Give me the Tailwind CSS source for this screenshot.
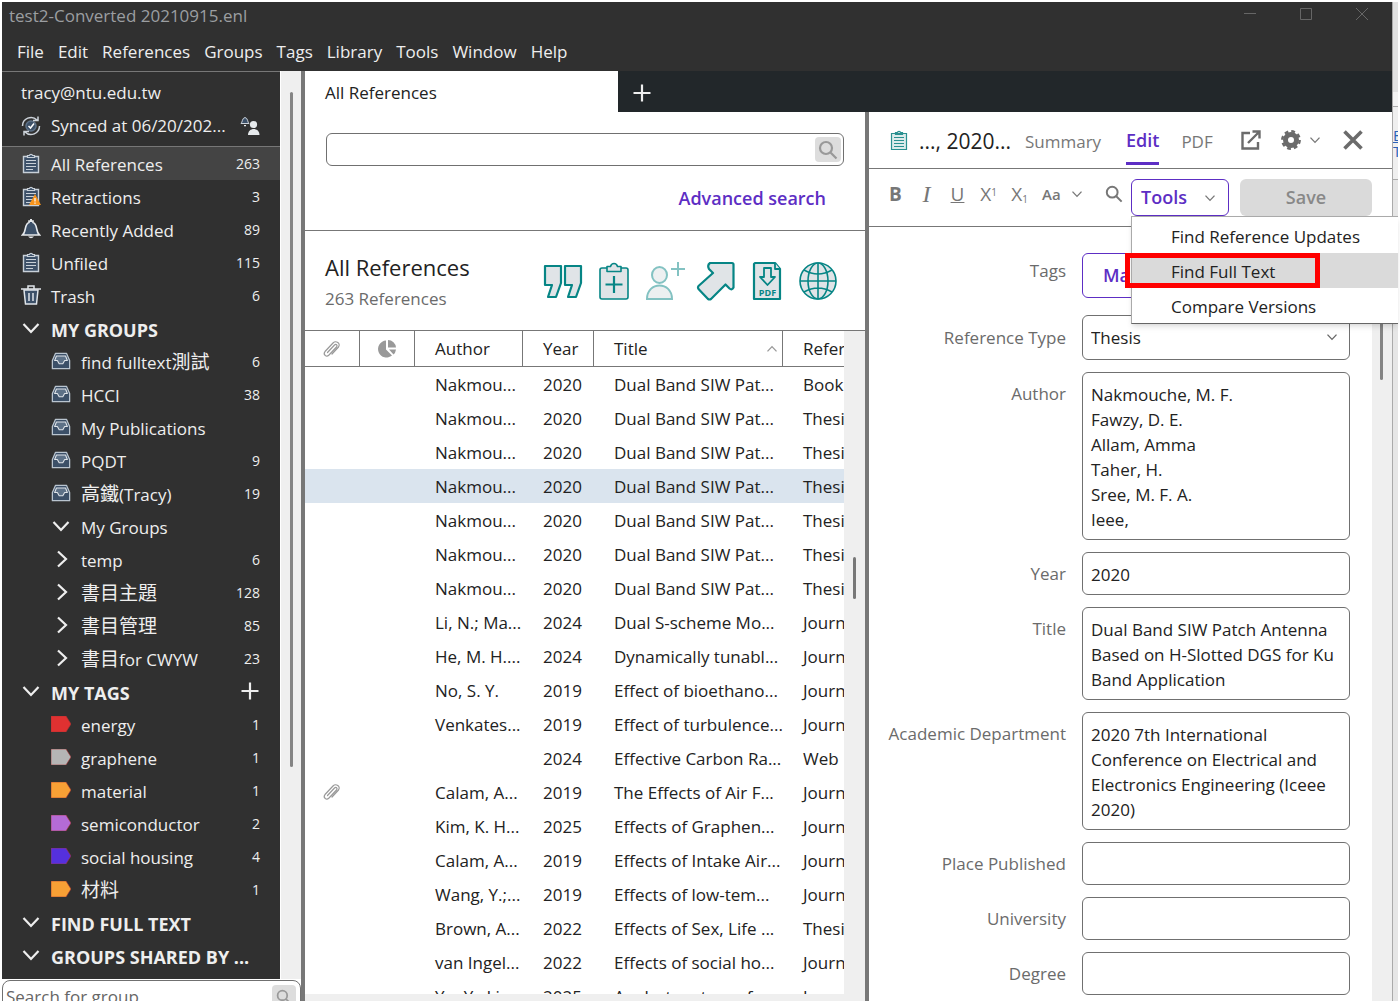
<!DOCTYPE html>
<html lang="en">
<head>
  <meta charset="UTF-8" />
  <meta name="viewport" content="width=device-width, initial-scale=1.0" />
  <script src="https://cdn.jsdelivr.net/npm/@tailwindcss/browser@4"></script>
  <title>test2-Converted 20210915.enl</title>
</head>
<body class="bg-white font-['Open_Sans','Noto_Sans_CJK_TC',sans-serif] text-[17px] text-[#222]">
  <!-- shared icons -->
  <svg class="hidden">
    <symbol id="i-clip" viewBox="0 0 20 22">
      <path d="M2.500 4.500h15v16h-15z" fill="#3c5068" stroke="#c8d0d8" stroke-width="1.400" />
      <path d="M6.500 5.500v-2h1.800a1.800 1.800 0 0 1 3.400 0h1.800v2z" fill="#3c5068" stroke="#c8d0d8" stroke-width="1.200" />
      <path d="M5 8.500h10M5 11.500h10M5 14.500h10M5 17.500h7" stroke="#c8d0d8" stroke-width="1.100" />
    </symbol>
    <symbol id="i-tray" viewBox="0 0 22 20">
      <path d="M5 1.500h12l3.500 8v9h-19v-9z" fill="#3c5068" stroke="#b9c4cf" stroke-width="1.400" stroke-linejoin="round" />
      <path d="M6 4.500h10l2 5h-3l-2 3.500H9L7 9.500H4z" fill="#5d7187" stroke="#dfe4e9" stroke-width="1.200" stroke-linejoin="round" />
    </symbol>
    <symbol id="i-down" viewBox="0 0 20 20"><path d="M2.500 6l7.500 8 7.500-8" fill="none" stroke="currentColor" stroke-width="2.200" /></symbol>
    <symbol id="i-right" viewBox="0 0 20 20"><path d="M7 2.500l8 7.500-8 7.500" fill="none" stroke="currentColor" stroke-width="2.200" /></symbol>
    <symbol id="i-plus" viewBox="0 0 20 20"><path d="M10 1.500v17M1.500 10h17" fill="none" stroke="currentColor" stroke-width="2.200" /></symbol>
    <symbol id="i-tag" viewBox="0 0 20 16"><path d="M0 0h15l5 8-5 8H0z" fill="currentColor" stroke="#a33" stroke-width=".6" /></symbol>
    <symbol id="i-search" viewBox="0 0 20 20"><path d="M12.500 12.500l6 6M14 8A6 6 0 1 1 2 8a6 6 0 0 1 12 0z" fill="none" stroke="currentColor" stroke-width="2.200" /></symbol>
    <symbol id="i-paper" viewBox="0 0 20 20"><path d="M5.500 13.500l7-7.500c1.500-1.500 3.500.3 2 2l-7.500 8c-2.800 2.600-6.200-.5-4-3.500l8-8.500c3-3 8 .5 5.500 4l-6.500 7" fill="none" stroke="#999" stroke-width="1.200" stroke-linecap="round" /></symbol>
  </svg>

  <div class="flex h-screen overflow-hidden p-[2px]">
    <div class="flex min-w-0 flex-1 flex-col">
      <!-- title bar and menu -->
      <header class="h-[69px] shrink-0 bg-[#303030]">
        <div class="flex h-7 items-center justify-between pr-6 pl-[7px]">
          <h1 class="text-[#9b9ea1]">test2-Converted 20210915.enl</h1>
          <div class="flex items-center gap-11 pb-1 text-[#666]">
            <button aria-label="Minimize"><svg class="size-3" viewBox="0 0 12 12"><path d="M0 5.500h12" stroke="currentColor" /></svg></button>
            <button aria-label="Maximize"><svg class="size-3" viewBox="0 0 12 12"><path d="M.5.500h11v11H.5z" fill="none" stroke="currentColor" /></svg></button>
            <button aria-label="Close"><svg class="size-3" viewBox="0 0 12 12"><path d="M0 0l12 12M12 0L0 12" stroke="currentColor" /></svg></button>
          </div>
        </div>
        <nav class="flex h-11 items-center gap-[14px] pl-[15px] text-[#eee]">
          <button>File</button>
          <button>Edit</button>
          <button>References</button>
          <button>Groups</button>
          <button>Tags</button>
          <button>Library</button>
          <button>Tools</button>
          <button>Window</button>
          <button>Help</button>
        </nav>
      </header>

      <div class="flex min-h-0 flex-1">
        <!-- sidebar -->
        <div class="flex w-[299px] shrink-0 flex-col overflow-hidden">
          <div class="flex h-[908px] shrink-0">
            <aside class="w-[278px] bg-[#303030] text-[#eee]">
              <div class="h-[76px] border-y border-[#777] pt-1 pr-5 pl-[19px]">
                <p class="h-[33px] leading-[33px]">tracy@ntu.edu.tw</p>
                <div class="flex h-[33px] items-center">
                  <svg class="mr-[10px] size-5" viewBox="0 0 20 20" fill="none" stroke="#cdd3da" stroke-width="1.500">
                    <circle cx="10" cy="10" r="5" fill="#3c5068" stroke="#5d7187" />
                    <path d="M7.500 10l2 2 3.500-4.500" stroke="#fff" />
                    <path d="M1.500 10A8.500 8.500 0 0 1 16 4M12 4.500h5V.5M18.500 10A8.500 8.500 0 0 1 4 16M8 15.500H3v4" />
                  </svg>
                  <span class="flex-1">Synced at 06/20/202...</span>
                  <svg class="size-5" viewBox="0 0 20 20" fill="#e6e9ec">
                    <path d="M1 7.500c1.500-1 1-5.500 4-6 3 .5 2.500 5 4 6z" fill="#3c5068" stroke="#cdd3da" />
                    <path d="M4 9h2v1.200H4z" />
                    <circle cx="13.500" cy="8.500" r="3.600" /><path d="M8 19c0-8 11.500-8 11.500 0z" />
                  </svg>
                </div>
              </div>
              <ul id="side-list"></ul>
            </aside>
            <div class="flex w-[21px] justify-center border-l border-white bg-[#efefef]">
              <div class="mt-[21px] h-[675px] w-[3px] rounded bg-[#848484]"></div>
            </div>
          </div>
          <div class="mt-px flex h-[34px] shrink-0 items-center rounded-lg border border-[#707070] pr-1 pl-[3px]">
            <input type="text" aria-label="Search for group" placeholder="Search for group" class="min-w-0 flex-1 placeholder:text-[#666] outline-none" />
            <button aria-label="Search groups" class="flex size-6 items-center justify-center rounded bg-[#ddd] text-[#999]"><svg class="size-4"><use href="#i-search" /></svg></button>
          </div>
        </div>
        <div class="w-1 shrink-0 bg-[#777]"></div>

        <div class="flex min-w-0 flex-1 flex-col">
          <!-- tab strip -->
          <div class="flex h-[41px] shrink-0 bg-[#22272a]">
            <button class="w-[313px] bg-white pt-[2px] pl-5 text-left">All References</button>
            <button aria-label="New tab" class="px-[14px] pt-[2px] text-[#eee]"><svg class="size-5"><use href="#i-plus" /></svg></button>
          </div>

          <div class="grid min-h-0 flex-1 grid-cols-[minmax(0,560fr)_4px_minmax(0,523fr)] grid-rows-[minmax(0,1fr)]">
            <!-- reference list -->
            <main class="flex min-h-0 flex-col">
              <div class="h-[119px] shrink-0 border-b border-[#777] px-[21px] pt-[21px]">
                <div class="flex h-[33px] items-center rounded-md border border-[#707070] pr-[2px]">
                  <input type="text" aria-label="Search references" class="min-w-0 flex-1 px-2 outline-none" />
                  <button aria-label="Search" class="flex h-[25px] w-[26px] items-center justify-center rounded bg-[#ddd] text-[#999]"><svg class="size-5" viewBox="0 0 20 20"><use href="#i-search" /></svg></button>
                </div>
                <a href="#" class="mt-5 mr-[18px] block text-right text-[18px] leading-6 font-semibold text-[#5d2ec4]">Advanced search</a>
              </div>
              <div class="flex h-[99px] shrink-0 items-center justify-between pr-[27px] pl-5">
                <div class="pt-1">
                  <h2 class="text-[22px] leading-8">All References</h2>
                  <p class="leading-8 text-[#6b6b6b]">263 References</p>
                </div>
                <div class="flex items-center gap-[11px] text-[#068585]">
                  <button aria-label="Quote"><svg class="size-10" viewBox="0 0 40 40" fill="#e0e4e7" stroke="currentColor" stroke-width="2.200" stroke-linejoin="round"><path d="M2 5h16v17l-5 14H5l4-12H2zM22 5h16v17l-5 14h-8l4-12h-7z" /></svg></button>
                  <button aria-label="New reference"><svg class="size-10" viewBox="0 0 40 40" fill="#e0e4e7" stroke="currentColor" stroke-width="1.600" stroke-linejoin="round"><rect x="6" y="7" width="28" height="31" rx="2" /><path d="M13 10.500V5.500h3.500c1-4 6-4 7 0H27v5z" /><path d="M20 15v17M11.500 23.500h17" stroke-width="2.200" /></svg></button>
                  <button aria-label="Share"><svg class="size-10" viewBox="0 0 40 40" fill="#edf0f1" stroke="#83c2c2" stroke-width="2"><ellipse cx="14.500" cy="14" rx="7.500" ry="8" /><path d="M2 38c0-18 25-18 25 0zM33 1v14M26 8h14" /></svg></button>
                  <button aria-label="Export"><svg class="size-10" viewBox="0 0 40 40" fill="#e0e4e7" stroke="currentColor" stroke-width="2.200" stroke-linejoin="round"><path d="M14 2h22q1.500 0 1.500 1.500v23q-1.500 3-4 1l-4-4L15 38q-1.500 1-3 0L2.500 28q-1-1.500 0-3L17 12l-4-4q-2-4 1-6z" /></svg></button>
                  <button aria-label="Find PDF"><svg class="size-10" viewBox="0 0 40 40" fill="#e0e4e7" stroke="currentColor" stroke-width="2.200" stroke-linejoin="round"><path d="M8 2h20l5 6v30H7V3z" /><path d="M28 2v6h5M17 7h7v9h4l-7.500 8-7.500-8h4z" stroke-width="1.800" /><text x="20.500" y="35" text-anchor="middle" font-size="9" font-weight="700" fill="currentColor" stroke="none">PDF</text></svg></button>
                  <button aria-label="Online search"><svg class="size-10" viewBox="0 0 40 40" fill="#e0e4e7" stroke="currentColor" stroke-width="1.600"><circle cx="20" cy="20" r="18" /><ellipse cx="20" cy="20" rx="10" ry="18" /><path d="M20 2v36M2 20h36M6 9q14 8 28 0M6 31q14-8 28 0" fill="none" /></svg></button>
                </div>
              </div>
              <div class="flex min-h-0 flex-1 border-t border-[#777]">
                <div class="min-w-0 flex-1 overflow-hidden border-b-[7px] border-[#efefef]">
                  <table class="w-full table-fixed border-separate border-spacing-0 text-left leading-6 whitespace-nowrap">
                    <thead>
                      <tr class="h-9">
                        <th class="w-[55px] border-r border-b border-[#777] pl-[17px]"><svg class="size-5"><use href="#i-paper" /></svg></th>
                        <th class="w-[55px] border-r border-b border-[#777] pl-[17px]"><svg class="size-5" viewBox="0 0 20 20" fill="#999"><path d="M9 1.500v9l6 6A8.500 8.500 0 1 1 9 1.500z" /><path d="M11 1a8 8 0 0 1 8 7.500h-8zM12 10.500h7q-.5 3.500-2.500 5z" /></svg></th>
                        <th class="w-[108px] border-r border-b border-[#777] pl-5 font-normal">Author</th>
                        <th class="w-[71px] border-r border-b border-[#777] pl-5 font-normal">Year</th>
                        <th class="w-[189px] border-r border-b border-[#777] pl-5 font-normal"><div class="flex items-center justify-between pr-1">Title<svg class="size-3 rotate-180 text-[#999]" viewBox="0 0 20 20"><use href="#i-down" /></svg></div></th>
                        <th class="overflow-hidden border-b border-[#777] pl-5 font-normal">Reference Type</th>
                      </tr>
                    </thead>
                    <tbody id="ref-rows"></tbody>
                  </table>
                </div>
                <div class="w-[21px] shrink-0 bg-[#efefef] pt-[226px] pl-[9px]">
                  <div class="h-[42px] w-[3px] rounded bg-[#777]"></div>
                </div>
              </div>
            </main>
            <div class="bg-[#777]"></div>

            <!-- reference details -->
            <section class="flex min-h-0 flex-col">
              <div class="flex h-[57px] shrink-0 items-center border-b border-[#777] pr-[29px] pl-5 text-[#777]">
                <svg class="mr-[10px] h-[22px] w-5" viewBox="0 0 20 22" fill="#dcebeb" stroke="#2a9090" stroke-width="1.200"><path d="M2.500 4.500h15v16h-15zM6.500 5.500v-2h1.800a1.800 1.800 0 0 1 3.400 0h1.800v2zM5 8.500h10M5 11.500h10M5 14.500h10M5 17.500h10" /></svg>
                <div class="flex items-center pt-[3px]">
                  <span class="w-[106px] text-[21px] text-[#222]">..., 2020...</span>
                  <button class="w-[101px] text-left">Summary</button>
                  <button class="mr-[22px] h-[46px] border-b-[3px] border-[#5d2ec4] text-[18px] font-semibold text-[#5d2ec4]">Edit</button>
                  <button>PDF</button>
                </div>
                <div class="flex flex-1 items-center justify-end">
                  <button aria-label="Open in new window" class="mr-5"><svg class="size-5" viewBox="0 0 20 20" fill="none" stroke="#6b6b6b" stroke-width="2.400"><path d="M9 3H1.500v15.500H17V12M7 13L17.500 2.500M11.500 1.500h7v7" /></svg></button>
                  <button aria-label="Settings" class="mr-[22px] flex items-center gap-2">
                    <svg class="size-5" viewBox="0 0 20 20" fill="none" stroke="#6b6b6b"><circle cx="10" cy="10" r="5.500" stroke-width="5" /><circle cx="10" cy="10" r="8.700" stroke-width="2.400" stroke-dasharray="3.800 3.033" /></svg>
                    <svg class="size-3" viewBox="0 0 20 20"><use href="#i-down" /></svg>
                  </button>
                  <button aria-label="Close panel"><svg class="size-5" viewBox="0 0 20 20"><path d="M1.500 1.500l17 17M18.500 1.500l-17 17" stroke="#6b6b6b" stroke-width="3.600" /></svg></button>
                </div>
              </div>
              <div class="flex h-[58px] shrink-0 items-center border-b border-[#777] pr-5 pl-[11px] text-[#777]">
                <div class="flex flex-1 items-center pr-2 pb-[7px] text-[19px]">
                  <button class="w-[31px] font-bold">B</button>
                  <button class="w-[31px] font-['Liberation_Serif'] text-[24px] italic">I</button>
                  <button class="w-[31px] underline">U</button>
                  <button class="w-[31px]">X<sup class="text-[10px]">1</sup></button>
                  <button class="w-[31px]">X<sub class="text-[10px]">1</sub></button>
                  <button class="ml-[7px] flex items-center gap-[10px] text-[15px] font-semibold">Aa<svg class="size-3" viewBox="0 0 20 20"><use href="#i-down" /></svg></button>
                  <button aria-label="Find" class="ml-auto"><svg class="size-[18px]" viewBox="0 0 20 20"><use href="#i-search" /></svg></button>
                </div>
                <div class="relative">
                  <button class="flex h-[37px] w-[98px] items-center justify-between rounded-md border border-[#5d2ec4] pr-3 pl-[9px] text-[18px] font-semibold text-[#5d2ec4]">Tools<svg class="size-3 text-[#777]" viewBox="0 0 20 20"><use href="#i-down" /></svg></button>
                  <ul class="absolute top-[37px] left-0 z-10 w-[267px] border border-r-0 border-[#aaa] border-b-[#666] bg-white pt-px text-[17px] leading-[35px] text-[#222] shadow-md">
                    <li><button class="block h-[35px] pt-px pl-[39px]">Find Reference Updates</button></li>
                    <li class="relative bg-[#dadada]"><button class="block h-[35px] pt-px pl-[39px]">Find Full Text</button><span class="pointer-events-none absolute top-0 -left-[7px] h-[35px] w-[195px] border-[5px] border-[#f00]"></span></li>
                    <li><button class="block h-[35px] pt-px pl-[39px]">Compare Versions</button></li>
                  </ul>
                </div>
                <button class="ml-[11px] h-[37px] w-[132px] rounded-md bg-[#dadada] text-[18px] font-semibold text-[#888]">Save</button>
              </div>
              <div class="flex min-h-0 flex-1">
                <form id="fields" class="grid min-w-0 flex-1 grid-cols-[197px_minmax(0,1fr)] content-start gap-x-4 gap-y-3 overflow-hidden pt-[26px] pr-[22px] leading-[25px]">
                  <span class="pt-[5px] text-right text-[#6b6b6b]">Tags</span>
                  <div class="mb-[5px]"><button type="button" class="h-[45px] w-full rounded-md border border-[#5d2ec4] pl-5 text-left text-[18px] font-semibold text-[#5d2ec4]">Manage Tags</button></div>
                  <label for="type" class="pt-[10px] text-right text-[#6b6b6b]">Reference Type</label>
                  <div class="relative">
                    <select id="type" class="h-[45px] w-full appearance-none rounded-md border border-[#707070] px-2"><option>Thesis</option></select>
                    <svg class="pointer-events-none absolute top-4 right-3 size-3 text-[#666]" viewBox="0 0 20 20"><use href="#i-down" /></svg>
                  </div>
                </form>
                <div class="w-5 shrink-0 bg-[#efefef] pl-2">
                  <div class="h-[153px] w-[3px] rounded bg-[#848484]"></div>
                </div>
              </div>
            </section>
          </div>
        </div>
      </div>
    </div>
    <!-- edge of the window behind -->
    <div class="w-[6px] shrink-0 overflow-hidden border-l border-[#aaa] bg-[#efefef]">
      <div class="h-[90px] bg-[#e2e2e2]"></div>
      <div class="h-[15px] border-b border-[#aaa] bg-[#f4f4f4]"></div>
      <div class="h-[73px] border-b border-[#aaa] pt-5 text-[15px] leading-4 text-[#2a62b8]"><u>E</u><br />T</div>
      <div class="h-full bg-[#e6e6e6]"></div>
    </div>
  </div>

  <script>
    // icon, label, count
    const side = [
      ["clip", "All References", 263], ["retract", "Retractions", 3], ["bell", "Recently Added", 89],
      ["clip", "Unfiled", 115], ["trash", "Trash", 6], ["head", "MY GROUPS", ""],
      ["tray", "find fulltext測試", 6], ["tray", "HCCI", 38], ["tray", "My Publications", ""],
      ["tray", "PQDT", 9], ["tray", "高鐵(Tracy)", 19], ["down", "My Groups", ""],
      ["right", "temp", 6], ["right", "書目主題", 128], ["right", "書目管理", 85], ["right", "書目for CWYW", 23],
      ["head", "MY TAGS", "+"],
      ["#e03131", "energy", 1], ["#b5b5b5", "graphene", 1], ["#f8a035", "material", 1],
      ["#b46bd6", "semiconductor", 2], ["#5530dd", "social housing", 4], ["#f8a035", "材料", 1],
      ["head", "FIND FULL TEXT", ""], ["head", "GROUPS SHARED BY ...", ""],
    ];

    function sideIcon(kind) {
      if (kind[0] === "#") return `<svg class="h-4 w-5" style="color:${kind}"><use href="#i-tag" /></svg>`;
      if (kind === "head") return `<svg class="size-5"><use href="#i-down" /></svg>`;
      if (kind === "retract") return `<svg class="h-[22px] w-5" viewBox="0 0 20 22"><use href="#i-clip" /><path d="M14 9l6 11H8z" fill="#f7941d" /><path d="M14 13v3.500M14 17.500v1.200" stroke="#fff" stroke-width="1.200" /></svg>`;
      if (kind === "bell") return `<svg class="size-5" viewBox="0 0 20 20"><path d="M1.500 16c4-3 1.500-11 6.500-12.500V2h4v1.500c5 1.500 2.500 9.500 6.500 12.500z" fill="#3c5068" stroke="#e6e9ec" stroke-width="1.600" /><path d="M9 0h2v3H9zM7 17.500h6q-3 3.500-6 0z" fill="#e6e9ec" /></svg>`;
      if (kind === "trash") return `<svg class="size-5" viewBox="0 0 20 20"><path d="M3 5h14l-1.500 14h-11z" fill="#3c5068" stroke="#dfe4e9" stroke-width="1.500" /><path d="M0 4h20M7 4V1h6v3M8 8v8M12 8v8" fill="none" stroke="#dfe4e9" stroke-width="1.500" /></svg>`;
      return `<svg class="h-[22px] w-5"><use href="#i-${kind}" /></svg>`;
    }

    // Chinese runs are set a little larger than the Latin text
    function sideLabel(label) {
      return label.replace(/[\u4e00-\u9fff]+/g, `<span lang="zh-Hant" class="text-[19px] leading-6">$&</span>`);
    }

    const topLevel = ["clip", "retract", "bell", "trash", "head"];
    document.getElementById("side-list").innerHTML = side.map(([kind, label, count], i) => `
      <li class="flex h-[33px] items-center pt-[2px] pr-5 ${topLevel.includes(kind) ? "pl-[19px]" : "pl-[49px]"} ${i === 0 ? "bg-[#444]" : ""}">
        <span class="mr-[10px] flex w-5 shrink-0 pb-1">${sideIcon(kind)}</span>
        <span class="flex-1 leading-6 whitespace-nowrap ${kind === "head" ? "text-[18px] font-bold" : ""}">${sideLabel(label)}</span>
        ${count === "+" ? `<button aria-label="Add tag" class="pb-1"><svg class="size-5"><use href="#i-plus" /></svg></button>` : `<span class="pb-[3px] text-[14px]">${count}</span>`}
      </li>`).join("");

    const refs = [
      ["Nakmou...", 2020, "Dual Band SIW Pat...", "Book"],
      ["Nakmou...", 2020, "Dual Band SIW Pat...", "Thesis"],
      ["Nakmou...", 2020, "Dual Band SIW Pat...", "Thesis"],
      ["Nakmou...", 2020, "Dual Band SIW Pat...", "Thesis"],
      ["Nakmou...", 2020, "Dual Band SIW Pat...", "Thesis"],
      ["Nakmou...", 2020, "Dual Band SIW Pat...", "Thesis"],
      ["Nakmou...", 2020, "Dual Band SIW Pat...", "Thesis"],
      ["Li, N.; Ma...", 2024, "Dual S-scheme Mo...", "Journal Article"],
      ["He, M. H....", 2024, "Dynamically tunabl...", "Journal Article"],
      ["No, S. Y.", 2019, "Effect of bioethano...", "Journal Article"],
      ["Venkates...", 2019, "Effect of turbulence...", "Journal Article"],
      ["", 2024, "Effective Carbon Ra...", "Web Page"],
      ["Calam, A...", 2019, "The Effects of Air F...", "Journal Article"],
      ["Kim, K. H...", 2025, "Effects of Graphen...", "Journal Article"],
      ["Calam, A...", 2019, "Effects of Intake Air...", "Journal Article"],
      ["Wang, Y.;...", 2019, "Effects of low-tem...", "Journal Article"],
      ["Brown, A...", 2022, "Effects of Sex, Life ...", "Thesis"],
      ["van Ingel...", 2022, "Effects of social ho...", "Journal Article"],
      ["Yu, Y.; Li...", 2025, "Analyst system of...", "Journal Article"],
    ];
    document.getElementById("ref-rows").innerHTML = refs.map(([author, year, title, type], i) => `
      <tr class="h-[34px] ${i === 3 ? "bg-[#dae4ee]" : ""}">
        <td class="pl-[17px]">${i === 12 ? `<svg class="size-5"><use href="#i-paper" /></svg>` : ""}</td>
        <td></td>
        <td class="pt-px pl-5">${author}</td>
        <td class="pt-px pl-5">${year}</td>
        <td class="pt-px pl-5">${title}</td>
        <td class="overflow-hidden pt-px pl-5">${type}</td>
      </tr>`).join("");

    const fields = [
      ["Author", "Nakmouche, M. F.\nFawzy, D. E.\nAllam, Amma\nTaher, H.\nSree, M. F. A.\nIeee,", 6],
      ["Year", "2020", 1],
      ["Title", "Dual Band SIW Patch Antenna\nBased on H-Slotted DGS for Ku\nBand Application", 3],
      ["Academic Department", "2020 7th International\nConference on Electrical and\nElectronics Engineering (Iceee\n2020)", 4],
      ["Place Published", "", 1],
      ["University", "", 1],
      ["Degree", "", 1],
    ];
    document.getElementById("fields").innerHTML += fields.map(([label, value, rows], i) => `
      <label for="f${i}" class="pt-[9px] text-right whitespace-nowrap text-[#6b6b6b]">${label}</label>
      <textarea id="f${i}" rows="${rows}" class="block w-full resize-none overflow-hidden rounded-md border border-[#707070] px-2 pt-[9px] pb-[7px] whitespace-pre">${value}</textarea>`).join("");
  </script>
</body>
</html>
